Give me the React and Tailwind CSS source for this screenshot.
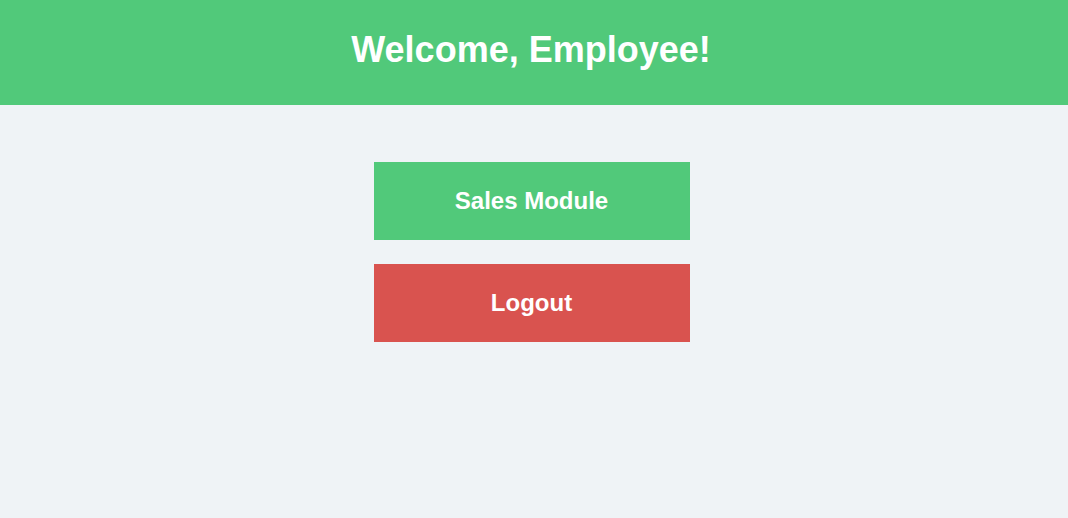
import React from "react";

export default function App() {
  return (
    <div
      className="min-h-screen bg-[#eff3f6]"
      style={{ fontFamily: '"Liberation Sans", Arial, sans-serif' }}
    >
      <header className="h-[105px] bg-[#51c97a] flex items-center justify-center pb-[6px] pr-[6px]">
        <h1 className="text-[36px] font-bold text-white">Welcome, Employee!</h1>
      </header>

      <main className="flex flex-col items-center pt-[57px] pr-[5px] gap-[24px]">
        <button className="w-[316px] h-[78px] bg-[#51c97a] text-white text-[24px] font-bold">
          Sales Module
        </button>
        <button className="w-[316px] h-[78px] bg-[#d9534f] text-white text-[24px] font-bold">
          Logout
        </button>
      </main>
    </div>
  );
}
